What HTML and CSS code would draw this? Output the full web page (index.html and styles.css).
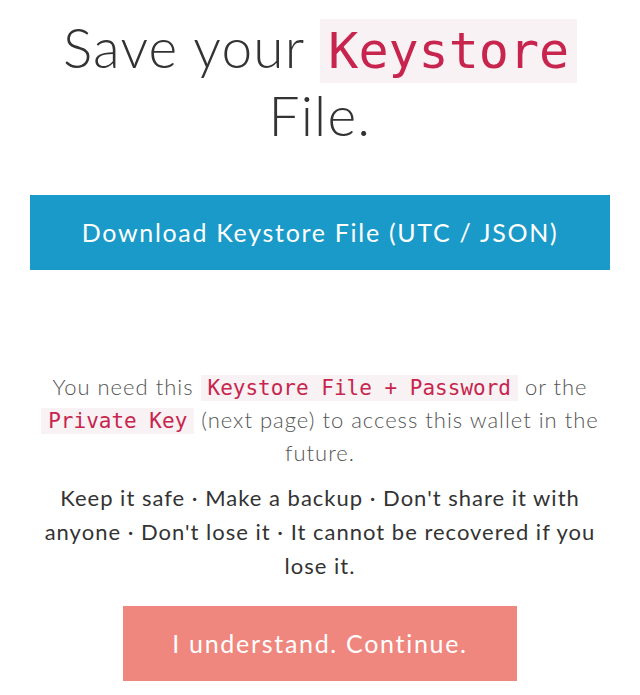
FILE: index.html
```html
<!DOCTYPE html>
<html lang="en">
<head>
    <meta charset="UTF-8">
    <meta name="viewport" content="width=device-width, initial-scale=1.0">
    <title>Save your Keystore File</title>
    <link rel="stylesheet" href="styles.css">
</head>
<body>
    <main class="wallet-step">
        <h1>Save your <code>Keystore</code> File.</h1>

        <a class="btn btn-download" href="#">Download Keystore File (UTC / JSON)</a>

        <div class="notes">
            <p class="note-access">You need this <code>Keystore File + Password</code> or the <code>Private Key</code> (next page) to access this wallet in the future.</p>
            <p class="note-warn">Keep it safe · Make a backup · Don't share it with anyone · Don't lose it · It cannot be recovered if you lose it.</p>
        </div>

        <a class="btn btn-continue" href="#">I understand. Continue.</a>
    </main>
</body>
</html>
```

FILE: styles.css
```css
* {
    margin: 0;
    padding: 0;
    box-sizing: border-box;
}
body {
    background: #fff;
    font-family: Lato, "Open Sans", sans-serif;
    color: #333;
}
code {
    font-family: "DejaVu Sans Mono", "Liberation Mono", monospace;
    color: #c7254e;
    background: #f9f2f4;
    letter-spacing: 0;
}
.wallet-step {
    display: flex;
    flex-direction: column;
    align-items: center;
    padding: 15px 30px 0;
    text-align: center;
}
.wallet-step h1 {
    font-size: 55px;
    font-weight: 300;
    line-height: 64px;
    letter-spacing: 1.2px;
    color: #333;
    width: 570px;
}
.wallet-step h1 code {
    font-size: 50px;
    padding: 3px 8px;
}
.btn {
    display: block;
    text-decoration: none;
    color: #fff;
    font-size: 25px;
    letter-spacing: 1.7px;
}
.btn-download {
    margin-top: 48px;
    width: 100%;
    height: 75px;
    line-height: 75px;
    background: #1a9ac8;
}
.notes {
    margin-top: 100px;
    width: 100%;
}
.notes p {
    font-size: 22px;
    line-height: 33px;
    letter-spacing: 1px;
}
.notes code {
    font-size: 21px;
    line-height: 1;
    padding: 1px 7px;
}
.note-access {
    font-weight: 300;
    color: #555;
}
.note-warn {
    margin-top: 12px;
    color: #333;
    line-height: 34px !important;
}
.btn-continue {
    margin-top: 23px;
    width: 394px;
    height: 75px;
    line-height: 75px;
    background: #f0877f;
}
```
